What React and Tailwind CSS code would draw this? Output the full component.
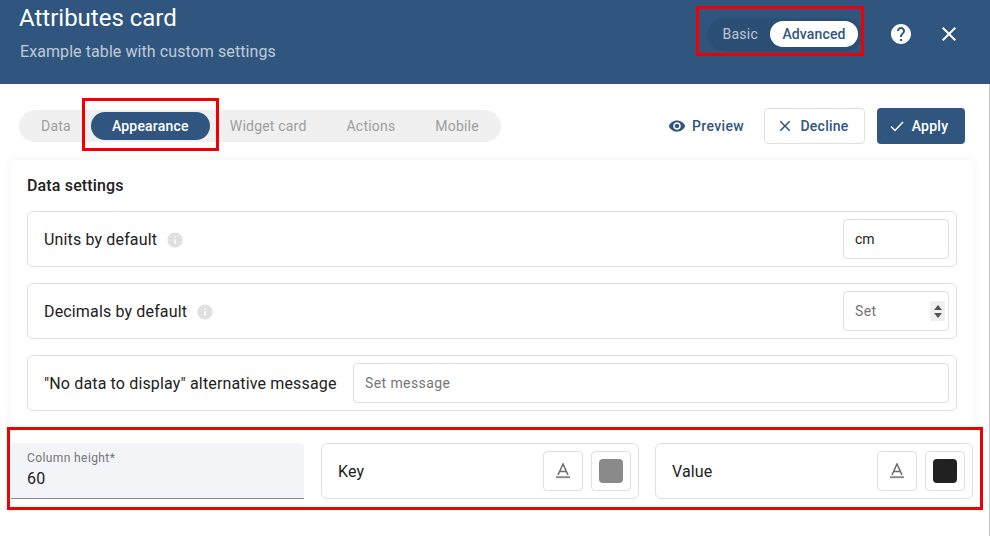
const helpPath = 'M12 2C6.48 2 2 6.48 2 12s4.48 10 10 10 10-4.48 10-10S17.52 2 12 2zm1 17h-2v-2h2v2zm2.07-7.75l-.9.92C13.45 12.9 13 13.5 13 15h-2v-.5c0-1.1.45-2.1 1.17-2.83l1.24-1.26c.37-.36.59-.86.59-1.41 0-1.1-.9-2-2-2s-2 .9-2 2H8c0-2.21 1.79-4 4-4s4 1.79 4 4c0 .88-.36 1.68-.93 2.25z';
const closePath = 'M19 6.41 17.59 5 12 10.59 6.41 5 5 6.41 10.59 12 5 17.59 6.41 19 12 13.41 17.59 19 19 17.59 13.41 12z';
const eyePath = 'M12 4.5C7 4.5 2.73 7.61 1 12c1.73 4.39 6 7.5 11 7.5s9.27-3.11 11-7.5c-1.73-4.39-6-7.5-11-7.5zM12 17c-2.76 0-5-2.24-5-5s2.24-5 5-5 5 2.24 5 5-2.24 5-5 5zm0-8c-1.66 0-3 1.34-3 3s1.34 3 3 3 3-1.34 3-3-1.34-3-3-3z';
const infoPath = 'M12 2C6.48 2 2 6.48 2 12s4.48 10 10 10 10-4.48 10-10S17.52 2 12 2zm1 15h-2v-6h2v6zm0-8h-2V7h2v2z';

function Icon({ d, className }) {
  return (
    <svg viewBox="0 0 24 24" className={className} fill="currentColor">
      <path d={d} />
    </svg>
  );
}

function Info() {
  return <Icon d={infoPath} className="w-[18px] h-[18px] text-[#e0e0e0]" />;
}

function Row({ children }) {
  return (
    <div className="h-14 flex items-center justify-between rounded-md border border-[#e0e0e0] pl-4 pr-[7px]">
      {children}
    </div>
  );
}

function ColorRow({ label, color }) {
  return (
    <div className="flex-1 h-14 flex items-center justify-between rounded-md border border-[#e0e0e0] pl-4 pr-[7px]">
      <span className="pt-px text-base tracking-[0.1px] text-[#212121]">{label}</span>
      <div className="flex gap-2">
        <div className="w-10 h-10 flex items-center justify-center rounded border border-[#e0e0e0]">
          <svg viewBox="0 0 16 16" className="w-4 h-4" fill="none" stroke="#6a6a6a">
            <path d="M3 12 8 1l5 11M4.8 8.6h6.4" strokeWidth="1.5" />
            <path d="M1 14.2h14" strokeWidth="2" stroke="#8a8a8a" />
          </svg>
        </div>
        <div className="w-10 h-10 flex items-center justify-center rounded border border-[#e0e0e0]">
          <div className={`w-6 h-6 rounded ${color}`} />
        </div>
      </div>
    </div>
  );
}

export default function App() {
  return (
    <div className="relative w-[990px] h-[536px] overflow-hidden bg-white font-['Roboto',sans-serif]">
      {/* Header */}
      <div className="h-[84px] bg-[#305680] flex justify-between pl-[19px] pr-[29px]">
        <div>
          <h1 className="text-2xl leading-[36px] text-white">Attributes card</h1>
          <p className="text-base leading-6 mt-1 pl-px tracking-[0.08px] text-white/70">Example table with custom settings</p>
        </div>
        <div className="flex items-center h-[68px] gap-[28px]">
          <div className="flex items-center h-8 rounded-full bg-[#2b4e75] p-[3px] pl-[14px] shadow-sm">
            <span className="text-sm tracking-[0.25px] text-white/70 mr-3">Basic</span>
            <span className="h-[26px] w-[88px] flex items-center justify-center rounded-full bg-white text-sm tracking-[0.15px] font-medium text-[#305680]">Advanced</span>
          </div>
          <div className="flex items-center gap-6">
            <Icon d={helpPath} className="w-6 h-6 text-white" />
            <Icon d={closePath} className="w-6 h-6 text-white" />
          </div>
        </div>
      </div>

      {/* Tabs and actions */}
      <div className="h-[68px] pt-4 flex items-center justify-between pl-[19px] pr-[25px]">
        <div className="flex items-center h-8 rounded-full bg-[#f0f0f0] text-sm tracking-[0.2px] text-[#9e9e9e] p-0.5 pr-[22px]">
          <span className="ml-5 mr-5">Data</span>
          <span className="h-7 w-[119px] flex items-center justify-center rounded-full bg-[#305680] text-white font-medium">Appearance</span>
          <span className="ml-5">Widget card</span>
          <span className="ml-10">Actions</span>
          <span className="ml-10">Mobile</span>
        </div>
        <div className="flex items-center text-sm tracking-[0.25px] font-medium text-[#305680]">
          <Icon d={eyePath} className="w-[18px] h-[18px] mr-[6px]" />
          <span className="tracking-[0.35px]">Preview</span>
          <button className="h-9 w-[101px] ml-5 pr-1 flex items-center justify-center gap-[6px] rounded border border-[#e0e0e0]">
            <Icon d={closePath} className="w-[18px] h-[18px]" />
            Decline
          </button>
          <button className="h-9 w-[88px] ml-3 pr-[6px] flex items-center justify-center gap-[6px] rounded bg-[#305680] text-white">
            <svg viewBox="0 0 18 18" className="w-[18px] h-[18px]" fill="none" stroke="currentColor" strokeWidth="1.4">
              <path d="m3 9.6 4 4 8-8.6" />
            </svg>
            Apply
          </button>
        </div>
      </div>

      {/* Settings panel */}
      <div className="pl-[11px] pr-[17px] pt-2 pb-9">
        <div className="rounded bg-white shadow-[0_0_8px_rgba(40,70,70,0.07)] px-4 pt-4 pb-[16px]">
          <h2 className="text-base font-medium leading-5 tracking-[0.15px] text-[#212121] mb-[15px]">Data settings</h2>
          <div className="flex flex-col gap-4">
            <Row>
              <div className="flex items-center gap-[9px] pt-px">
                <span className="text-base tracking-[0.15px] text-[#212121]">Units by default</span>
                <Info />
              </div>
              <div className="w-[106px] h-10 flex items-center pl-[11px] pr-3 rounded border border-[#e0e0e0] text-sm text-[#212121]">cm</div>
            </Row>
            <Row>
              <div className="flex items-center gap-[9px] pt-px">
                <span className="text-base tracking-[0.15px] text-[#212121]">Decimals by default</span>
                <Info />
              </div>
              <div className="w-[106px] h-10 flex items-center justify-between pl-[11px] pr-[3px] rounded border border-[#e0e0e0] text-sm tracking-[0.4px] text-[#757575]">
                Set
                <span className="w-[15px] h-5 bg-[#f0f0f0] flex flex-col items-center justify-center gap-[3px]">
                  <span className="w-0 h-0 border-x-[4px] border-x-transparent border-b-[5px] border-b-[#555]" />
                  <span className="w-0 h-0 border-x-[4px] border-x-transparent border-t-[5px] border-t-[#555]" />
                </span>
              </div>
            </Row>
            <Row>
              <span className="pt-px text-base tracking-[0.15px] text-[#212121]">"No data to display" alternative message</span>
              <div className="w-[596px] h-10 flex items-center pl-[11px] pr-3 rounded border border-[#e0e0e0] text-sm tracking-[0.4px] text-[#757575]">Set message</div>
            </Row>
          </div>
        </div>

        <div className="flex gap-4 mt-4">
          <div className="w-[293px] mr-px h-14 rounded-t bg-[#f3f4f8] border-b border-[#8a8a8a] pl-4 pt-2">
            <div className="text-xs leading-[14px] tracking-[0.4px] text-[#757575]">Column height*</div>
            <div className="text-base leading-5 mt-1 tracking-[0.15px] text-[#212121]">60</div>
          </div>
          <ColorRow label="Key" color="bg-[#8a8a8a]" />
          <ColorRow label="Value" color="bg-[#212121]" />
        </div>
      </div>

      {/* Red annotation boxes */}
      <div className="absolute left-[696px] top-[6px] w-[168px] h-[50px] border-[3px] border-[#f00000]" />
      <div className="absolute left-[82px] top-[98px] w-[137px] h-[53px] border-[3px] border-[#f00000]" />
      <div className="absolute left-[7px] top-[427px] w-[976px] h-[83px] border-[3px] border-[#f00000]" />
      <div className="absolute right-0 top-[84px] bottom-0 w-px bg-[#c4c4c4]" />
    </div>
  );
}
